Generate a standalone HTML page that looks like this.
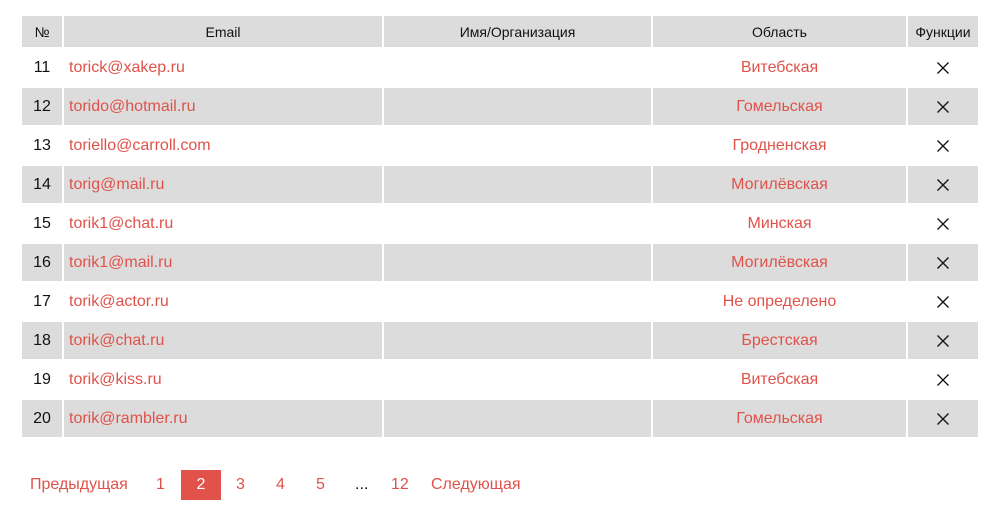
<!DOCTYPE html>
<html><head><meta charset="utf-8"><style>
body{margin:0;background:#fff;font-family:"Liberation Sans",sans-serif;width:1000px;height:518px;position:relative;overflow:hidden}
.c{position:absolute;background:#dcdcdc;box-sizing:border-box;display:flex;align-items:center}
.h{font-size:14px;color:#111;justify-content:center}
.t{position:absolute;font-size:16px;line-height:37px}
.r{color:#e0524a}
.x{position:absolute;width:14px;height:14px}
.p{position:absolute;top:470px;height:30px;line-height:30px;font-size:16px;color:#e0524a}
</style></head><body>
<div class="c h" style="left:22px;top:16px;width:40px;height:31px">№</div>
<div class="c h" style="left:64px;top:16px;width:318px;height:31px">Email</div>
<div class="c h" style="left:384px;top:16px;width:267px;height:31px">Имя/Организация</div>
<div class="c h" style="left:653px;top:16px;width:253px;height:31px">Область</div>
<div class="c h" style="left:908px;top:16px;width:70px;height:31px">Функции</div>
<div id="rows"></div>
<script>
var d=[["11","torick@xakep.ru","Витебская"],["12","torido@hotmail.ru","Гомельская"],["13","toriello@carroll.com","Гродненская"],["14","torig@mail.ru","Могилёвская"],["15","torik1@chat.ru","Минская"],["16","torik1@mail.ru","Могилёвская"],["17","torik@actor.ru","Не определено"],["18","torik@chat.ru","Брестская"],["19","torik@kiss.ru","Витебская"],["20","torik@rambler.ru","Гомельская"]];
var h="";
d.forEach(function(r,i){var y=49+39*i;
if(i%2){h+='<div class="c" style="left:22px;top:'+y+'px;width:40px;height:37px"></div><div class="c" style="left:64px;top:'+y+'px;width:318px;height:37px"></div><div class="c" style="left:384px;top:'+y+'px;width:267px;height:37px"></div><div class="c" style="left:653px;top:'+y+'px;width:253px;height:37px"></div><div class="c" style="left:908px;top:'+y+'px;width:70px;height:37px"></div>';}
h+='<div class="t" style="left:22px;width:40px;text-align:center;top:'+y+'px;color:#111">'+r[0]+'</div>';
h+='<div class="t r" style="left:69px;top:'+y+'px">'+r[1]+'</div>';
h+='<div class="t r" style="left:653px;width:253px;text-align:center;top:'+y+'px">'+r[2]+'</div>';
h+='<svg class="x" style="left:936px;top:'+(y+12)+'px" viewBox="0 0 14 14"><path d="M1.5 1.5L12.5 12.5M12.5 1.5L1.5 12.5" stroke="#111" stroke-width="1.3"/></svg>';
});
document.getElementById("rows").innerHTML=h;
</script>
<div class="p" style="left:30px">Предыдущая</div>
<div class="p" style="left:156px">1</div>
<div class="p" style="left:181px;width:40px;background:#e0524a;color:#fff;text-align:center">2</div>
<div class="p" style="left:236px">3</div>
<div class="p" style="left:276px">4</div>
<div class="p" style="left:316px">5</div>
<div class="p" style="left:355px;color:#111">...</div>
<div class="p" style="left:391px">12</div>
<div class="p" style="left:431px">Следующая</div>
</body></html>
